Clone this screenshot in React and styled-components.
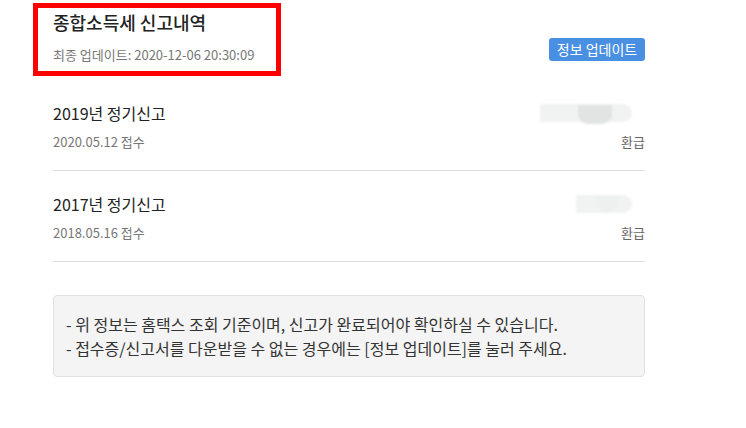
import React from 'react';
import styled, { createGlobalStyle } from 'styled-components';

const GlobalStyle = createGlobalStyle`
  html, body {
    margin: 0;
    padding: 0;
    background: #fff;
  }
  body {
    font-family: "Noto Sans CJK KR", "Noto Sans", sans-serif;
    color: #222;
  }
`;

const returns = [
  { title: '2019년 정기신고', date: '2020.05.12 접수', result: '환급', blur: 'wide' },
  { title: '2017년 정기신고', date: '2018.05.16 접수', result: '환급', blur: 'narrow' },
];

const Page = styled.div`
  width: 592px;
  margin-left: 53px;
  padding-top: 3px;
`;

const Header = styled.header`
  display: flex;
  justify-content: space-between;
  align-items: flex-start;
`;

const TitleBlock = styled.div`
  margin-left: -20px;
  padding: 1px 22px 7px 15px;
  border: 5px solid #ff0000;
`;

const Title = styled.h1`
  margin: 0;
  font-size: 18px;
  line-height: 26px;
  font-weight: 500;
  color: #222;
`;

const Updated = styled.p`
  margin: 10px 0 0;
  font-size: 13px;
  line-height: 19px;
  color: #777;
`;

const UpdateButton = styled.button`
  margin-top: 35px;
  width: 96px;
  height: 23px;
  padding: 0;
  border: none;
  border-radius: 3px;
  background: #4a90e2;
  color: #fff;
  font-family: inherit;
  font-size: 14px;
  line-height: 23px;
  cursor: pointer;
`;

const List = styled.ul`
  list-style: none;
  margin: 4px 0 0;
  padding: 0;
`;

const Row = styled.li`
  padding: 22px 0 19px;
  border-bottom: 1px solid #dedede;
`;

const Line = styled.div`
  display: flex;
  justify-content: space-between;
  align-items: center;
  & + & {
    margin-top: 9px;
  }
`;

const RowTitle = styled.span`
  font-size: 16px;
  line-height: 22px;
  color: #222;
`;

const Meta = styled.span`
  font-size: 13px;
  line-height: 18px;
  color: ${p => (p.$dark ? '#666' : '#777')};
`;

const Blurred = styled.span`
  position: relative;
  display: block;
  width: ${p => (p.$wide ? '92px' : '56px')};
  height: 18px;
  margin-right: 13px;
  border-radius: 0 9px 9px 0;
  background: #f1f2f2;
  filter: blur(1px);
  &::after {
    content: '';
    position: absolute;
    top: 1px;
    bottom: ${p => (p.$wide ? '-2px' : '1px')};
    left: ${p => (p.$wide ? '38px' : '20px')};
    width: ${p => (p.$wide ? '34px' : '22px')};
    border-radius: 0 0 10px 10px;
    background: ${p => (p.$wide ? '#e2e3e3' : '#eeefef')};
  }
`;

const Notice = styled.div`
  margin-top: 33px;
  padding: 16px 12px;
  border: 1px solid #e2e2e2;
  border-radius: 4px;
  background: #f4f4f4;
  font-size: 16px;
  line-height: 24px;
  color: #333;
`;

export default function App() {
  return (
    <>
      <GlobalStyle />
      <Page>
        <Header>
          <TitleBlock>
            <Title>종합소득세 신고내역</Title>
            <Updated>최종 업데이트: 2020-12-06 20:30:09</Updated>
          </TitleBlock>
          <UpdateButton>정보 업데이트</UpdateButton>
        </Header>
        <List>
          {returns.map(r => (
            <Row key={r.title}>
              <Line>
                <RowTitle>{r.title}</RowTitle>
                <Blurred $wide={r.blur === 'wide'} />
              </Line>
              <Line>
                <Meta>{r.date}</Meta>
                <Meta $dark>{r.result}</Meta>
              </Line>
            </Row>
          ))}
        </List>
        <Notice>
          <div>- 위 정보는 홈택스 조회 기준이며, 신고가 완료되어야 확인하실 수 있습니다.</div>
          <div>- 접수증/신고서를 다운받을 수 없는 경우에는 [정보 업데이트]를 눌러 주세요.</div>
        </Notice>
      </Page>
    </>
  );
}
